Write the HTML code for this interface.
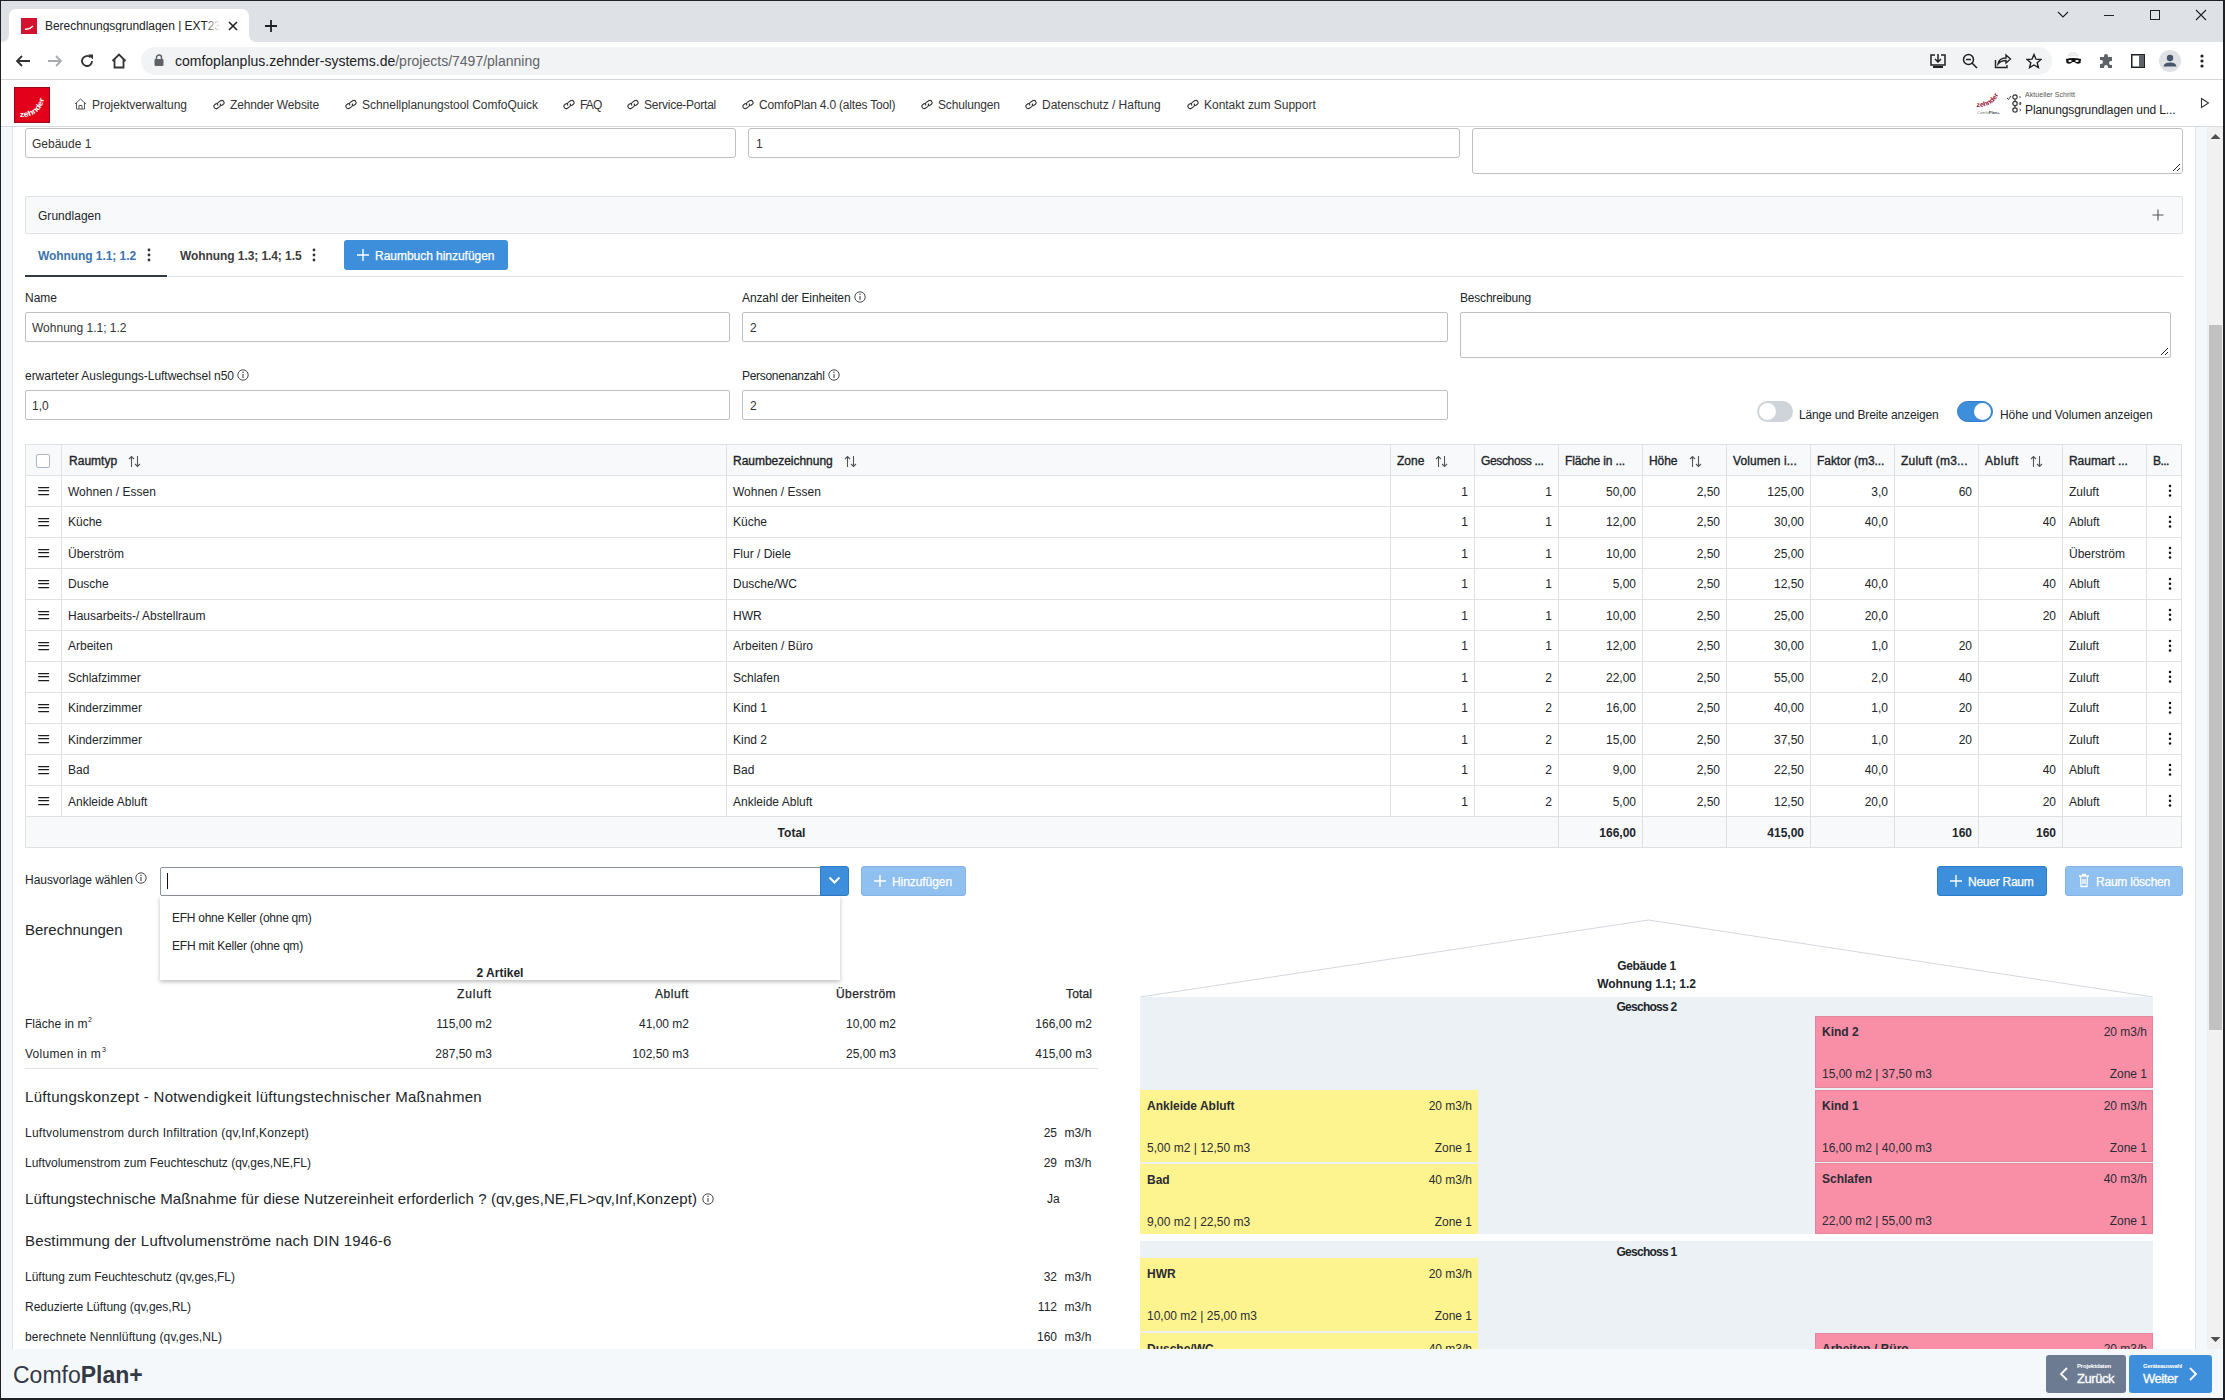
<!DOCTYPE html>
<html><head><meta charset="utf-8"><title>ComfoPlan+</title>
<style>
html,body{margin:0;padding:0;width:2225px;height:1400px;overflow:hidden;background:#fff;font-family:'Liberation Sans', sans-serif;}
.a{position:absolute;box-sizing:border-box;}
.t{white-space:nowrap;}
</style></head><body>
<div class="a" style="left:0px;top:0px;width:2225px;height:42px;background:#dee1e6;"></div>
<div class="a" style="left:0px;top:42px;width:2225px;height:38px;background:#ffffff;"></div>
<div class="a" style="left:0px;top:79px;width:2225px;height:1px;background:#d3d6da;"></div>
<svg class="a" style="left:0;top:0" width="300" height="43"><path d="M1 42 Q9 42 9 34 L9 17 Q9 9 17 9 L241 9 Q249 9 249 17 L249 34 Q249 42 257 42 Z" fill="#fff"/></svg>
<div class="a" style="left:21px;top:18px;width:16px;height:16px;background:#d2122e;"></div>
<svg class="a" style="left:21px;top:18px" width="16" height="16"><path d="M4 11 Q8 12 12 8" stroke="#fff" stroke-width="1.5" fill="none"/></svg>
<div class="a t" style="top:20px;font-size:12px;line-height:12px;color:#202124;left:45px;width:177px;overflow:hidden;letter-spacing:-0.042px;">Berechnungsgrundlagen | EXT23(</div>
<div class="a" style="left:204px;top:17px;width:19px;height:18px;background:linear-gradient(90deg,rgba(255,255,255,0),#fff 85%)"></div>
<svg class="a" style="left:227px;top:20px" width="12" height="12"><path d="M2 2L10 10M10 2L2 10" stroke="#202124" stroke-width="1.6"/></svg>
<svg class="a" style="left:264px;top:19px" width="14" height="14"><path d="M7 1V13M1 7H13" stroke="#202124" stroke-width="1.8"/></svg>
<svg class="a" style="left:2056px;top:10px" width="14" height="10"><path d="M2 2L7 7L12 2" stroke="#202124" stroke-width="1.2" fill="none"/></svg>
<div class="a" style="left:2104px;top:15px;width:10px;height:1px;background:#202124;"></div>
<div class="a" style="left:2150px;top:10px;width:10px;height:10px;border:1px solid #202124;box-sizing:border-box;"></div>
<svg class="a" style="left:2195px;top:9px" width="12" height="12"><path d="M1 1L11 11M11 1L1 11" stroke="#202124" stroke-width="1.1"/></svg>
<svg class="a" style="left:14px;top:53px" width="18" height="16"><path d="M16 8H3M8 3L3 8L8 13" stroke="#333" stroke-width="1.8" fill="none"/></svg>
<svg class="a" style="left:46px;top:53px" width="18" height="16"><path d="M2 8H15M10 3L15 8L10 13" stroke="#a8abaf" stroke-width="1.8" fill="none"/></svg>
<svg class="a" style="left:79px;top:53px" width="16" height="16"><path d="M13 8A5 5 0 1 1 11.5 4.4" stroke="#333" stroke-width="1.8" fill="none"/><path d="M9 1.5H14V6.5Z" fill="#333"/></svg>
<svg class="a" style="left:110px;top:52px" width="18" height="18"><path d="M2.5 9L9 2.5L15.5 9M4.5 7.5V15.5H13.5V7.5" stroke="#333" stroke-width="1.8" fill="none"/></svg>
<div class="a" style="left:141px;top:47px;width:1911px;height:28px;background:#f1f3f4;border-radius:14px;"></div>
<svg class="a" style="left:154px;top:54px" width="10" height="13"><rect x="0.5" y="5" width="9" height="7" rx="1" fill="#5f6368"/><path d="M2.5 5V3.5A2.5 2.5 0 0 1 7.5 3.5V5" stroke="#5f6368" stroke-width="1.5" fill="none"/></svg>
<div class="a" style="left:175px;top:54px;font-size:14px;line-height:14px;color:#202124">comfoplanplus.zehnder-systems.de<span style="color:#5f6368">/projects/7497/planning</span></div>
<svg class="a" style="left:1929px;top:53px" width="18" height="16"><path d="M6 2H2V12H16V2H12M9 1V9M6 6L9 9L12 6" stroke="#202124" stroke-width="1.5" fill="none"/><rect x="4" y="13" width="10" height="2" fill="#202124"/></svg>
<svg class="a" style="left:1962px;top:53px" width="16" height="16"><circle cx="6.5" cy="6.5" r="5" stroke="#202124" stroke-width="1.5" fill="none"/><path d="M4 6.5H9M10 10L15 15" stroke="#202124" stroke-width="1.5"/></svg>
<svg class="a" style="left:1994px;top:53px" width="18" height="16"><path d="M1.5 7V14.5H13V12M4 11Q5 5 12 5V2L16.5 6L12 10V7.5Q7 7.5 4 11Z" stroke="#202124" stroke-width="1.4" fill="none"/></svg>
<svg class="a" style="left:2026px;top:53px" width="16" height="16"><path d="M8 1.5L10 6.2L15 6.5L11.2 9.7L12.4 14.6L8 12L3.6 14.6L4.8 9.7L1 6.5L6 6.2Z" stroke="#202124" stroke-width="1.4" fill="none"/></svg>
<svg class="a" style="left:2065px;top:52px" width="17" height="16"><path d="M5 1H11L13 4H3Z" fill="#f4f4f4" stroke="#ccc" stroke-width="0.5"/><path d="M1 7Q8 5 16 7L15.5 11Q12 13 9.5 10H7.5Q5 13 1.5 11Z" fill="#111"/><ellipse cx="5" cy="9" rx="1.8" ry="1" fill="#fff"/><ellipse cx="12" cy="9" rx="1.8" ry="1" fill="#fff"/></svg>
<svg class="a" style="left:2099px;top:54px" width="15" height="15"><path d="M5 2A2 2 0 0 1 9 2V3H13V7H12A2 2 0 0 0 12 11H13V14H9V13A2 2 0 0 0 5 13V14H1V10H2A2 2 0 0 0 2 6H1V3H5Z" fill="#5f6368"/></svg>
<svg class="a" style="left:2131px;top:54px" width="14" height="14"><rect x="0.75" y="0.75" width="12.5" height="12.5" stroke="#202124" stroke-width="1.5" fill="none"/><rect x="8" y="1" width="5" height="12" fill="#5f6368"/></svg>
<svg class="a" style="left:2159px;top:50px" width="22" height="22"><circle cx="11" cy="11" r="11" fill="#dfe1e5"/><circle cx="11" cy="8" r="3.2" fill="#47546a"/><path d="M4.5 16.5Q5 12.5 11 12.5Q17 12.5 17.5 16.5Z" fill="#47546a"/></svg>
<svg class="a" style="left:2198px;top:53px" width="8" height="16"><circle cx="4" cy="3" r="1.6" fill="#202124"/><circle cx="4" cy="8" r="1.6" fill="#202124"/><circle cx="4" cy="13" r="1.6" fill="#202124"/></svg>
<div class="a" style="left:0px;top:80px;width:2225px;height:46px;background:#ffffff;"></div>
<div class="a" style="left:0px;top:126px;width:2225px;height:1px;background:#d8dde2;"></div>
<div class="a" style="left:14px;top:87px;width:36px;height:36px;background:#e2001a;"></div>
<div class="a" style="left:14px;top:87px;width:36px;height:36px;border:1px solid #9a0a17;box-sizing:border-box;"></div>
<svg class="a" style="left:14px;top:87px" width="36" height="36"><defs><path id="zp" d="M5.5 30 Q26 31 30.5 11"/></defs><text font-family="Liberation Sans" font-weight="bold" font-size="7.6" fill="#fff"><textPath href="#zp" textLength="34" lengthAdjust="spacingAndGlyphs">zehnder</textPath></text></svg>
<svg class="a" style="left:74px;top:98px" width="13" height="12"><path d="M1 6L6.5 1L12 6M2.5 5V11H10.5V5M5 11V7.5H8V11" stroke="#555" stroke-width="1" fill="none"/></svg>
<div class="a t" style="top:99px;font-size:12px;line-height:12px;color:#333;left:92px;letter-spacing:-0.023px;">Projektverwaltung</div>
<svg class="a" style="left:212px;top:99px" width="14" height="11"><g transform="rotate(-33 7 5.5)" stroke="#333" stroke-width="1.1" fill="none"><path d="M5.8 3.3H3.6A2.2 2.2 0 0 0 3.6 7.7H6.4A2.2 2.2 0 0 0 8.3 5.3"/><path d="M8.2 7.7H10.4A2.2 2.2 0 0 0 10.4 3.3H7.6A2.2 2.2 0 0 0 5.7 5.7"/></g></svg>
<div class="a t" style="top:99px;font-size:12px;line-height:12px;color:#333;left:230px;letter-spacing:-0.145px;">Zehnder Website</div>
<svg class="a" style="left:344px;top:99px" width="14" height="11"><g transform="rotate(-33 7 5.5)" stroke="#333" stroke-width="1.1" fill="none"><path d="M5.8 3.3H3.6A2.2 2.2 0 0 0 3.6 7.7H6.4A2.2 2.2 0 0 0 8.3 5.3"/><path d="M8.2 7.7H10.4A2.2 2.2 0 0 0 10.4 3.3H7.6A2.2 2.2 0 0 0 5.7 5.7"/></g></svg>
<div class="a t" style="top:99px;font-size:12px;line-height:12px;color:#333;left:362px;letter-spacing:-0.026px;">Schnellplanungstool ComfoQuick</div>
<svg class="a" style="left:562px;top:99px" width="14" height="11"><g transform="rotate(-33 7 5.5)" stroke="#333" stroke-width="1.1" fill="none"><path d="M5.8 3.3H3.6A2.2 2.2 0 0 0 3.6 7.7H6.4A2.2 2.2 0 0 0 8.3 5.3"/><path d="M8.2 7.7H10.4A2.2 2.2 0 0 0 10.4 3.3H7.6A2.2 2.2 0 0 0 5.7 5.7"/></g></svg>
<div class="a t" style="top:99px;font-size:12px;line-height:12px;color:#333;left:580px;letter-spacing:-0.872px;">FAQ</div>
<svg class="a" style="left:626px;top:99px" width="14" height="11"><g transform="rotate(-33 7 5.5)" stroke="#333" stroke-width="1.1" fill="none"><path d="M5.8 3.3H3.6A2.2 2.2 0 0 0 3.6 7.7H6.4A2.2 2.2 0 0 0 8.3 5.3"/><path d="M8.2 7.7H10.4A2.2 2.2 0 0 0 10.4 3.3H7.6A2.2 2.2 0 0 0 5.7 5.7"/></g></svg>
<div class="a t" style="top:99px;font-size:12px;line-height:12px;color:#333;left:644px;letter-spacing:-0.240px;">Service-Portal</div>
<svg class="a" style="left:741px;top:99px" width="14" height="11"><g transform="rotate(-33 7 5.5)" stroke="#333" stroke-width="1.1" fill="none"><path d="M5.8 3.3H3.6A2.2 2.2 0 0 0 3.6 7.7H6.4A2.2 2.2 0 0 0 8.3 5.3"/><path d="M8.2 7.7H10.4A2.2 2.2 0 0 0 10.4 3.3H7.6A2.2 2.2 0 0 0 5.7 5.7"/></g></svg>
<div class="a t" style="top:99px;font-size:12px;line-height:12px;color:#333;left:759px;letter-spacing:-0.192px;">ComfoPlan 4.0 (altes Tool)</div>
<svg class="a" style="left:920px;top:99px" width="14" height="11"><g transform="rotate(-33 7 5.5)" stroke="#333" stroke-width="1.1" fill="none"><path d="M5.8 3.3H3.6A2.2 2.2 0 0 0 3.6 7.7H6.4A2.2 2.2 0 0 0 8.3 5.3"/><path d="M8.2 7.7H10.4A2.2 2.2 0 0 0 10.4 3.3H7.6A2.2 2.2 0 0 0 5.7 5.7"/></g></svg>
<div class="a t" style="top:99px;font-size:12px;line-height:12px;color:#333;left:938px;letter-spacing:-0.169px;">Schulungen</div>
<svg class="a" style="left:1024px;top:99px" width="14" height="11"><g transform="rotate(-33 7 5.5)" stroke="#333" stroke-width="1.1" fill="none"><path d="M5.8 3.3H3.6A2.2 2.2 0 0 0 3.6 7.7H6.4A2.2 2.2 0 0 0 8.3 5.3"/><path d="M8.2 7.7H10.4A2.2 2.2 0 0 0 10.4 3.3H7.6A2.2 2.2 0 0 0 5.7 5.7"/></g></svg>
<div class="a t" style="top:99px;font-size:12px;line-height:12px;color:#333;left:1042px;letter-spacing:-0.006px;">Datenschutz / Haftung</div>
<svg class="a" style="left:1186px;top:99px" width="14" height="11"><g transform="rotate(-33 7 5.5)" stroke="#333" stroke-width="1.1" fill="none"><path d="M5.8 3.3H3.6A2.2 2.2 0 0 0 3.6 7.7H6.4A2.2 2.2 0 0 0 8.3 5.3"/><path d="M8.2 7.7H10.4A2.2 2.2 0 0 0 10.4 3.3H7.6A2.2 2.2 0 0 0 5.7 5.7"/></g></svg>
<div class="a t" style="top:99px;font-size:12px;line-height:12px;color:#333;left:1204px;letter-spacing:-0.019px;">Kontakt zum Support</div>
<svg class="a" style="left:1975px;top:90px" width="28" height="28"><defs><path id="zp2" d="M1.5 17 Q18 18 24.5 2.5"/></defs><text font-family="Liberation Sans" font-weight="bold" font-size="6.8" fill="#9a1532"><textPath href="#zp2" textLength="27" lengthAdjust="spacingAndGlyphs">zehnder</textPath></text><text x="2" y="24" font-family="Liberation Sans" font-size="4" fill="#888">Comfo<tspan font-weight="bold" fill="#444">Plan+</tspan></text></svg>
<svg class="a" style="left:2006px;top:93px" width="18" height="20"><path d="M1 5L2.5 6.5L5 3" stroke="#333" stroke-width="1" fill="none"/><circle cx="9" cy="4" r="2.2" stroke="#333" stroke-width="1.2" fill="none"/><circle cx="9" cy="10.5" r="2.2" stroke="#333" stroke-width="1.2" fill="none"/><circle cx="9" cy="17" r="2.2" stroke="#333" stroke-width="1.2" fill="none"/><path d="M9 6.2V8.3M9 12.7V14.8" stroke="#333" stroke-width="1.2"/><path d="M14 3V5M13.5 9.5H15V10.5H13.5V11.5H15M13.5 16L15 17L13.5 18" stroke="#333" stroke-width="0.8" fill="none"/></svg>
<div class="a t" style="top:91px;font-size:7px;line-height:7px;color:#555;left:2025px;letter-spacing:0.057px;">Aktueller Schritt</div>
<div class="a t" style="top:104px;font-size:12px;line-height:12px;color:#222;left:2025px;letter-spacing:-0.110px;">Planungsgrundlagen und L...</div>
<svg class="a" style="left:2200px;top:97px" width="10" height="12"><path d="M1.5 1.5L8.5 6L1.5 10.5Z" stroke="#333" stroke-width="1.1" fill="none"/></svg>
<div class="a" style="left:1px;top:127px;width:11px;height:1222px;background:#f4f8fa;"></div>
<div class="a" style="left:12px;top:127px;width:1px;height:1222px;background:#dfe3e8;"></div>
<div class="a" style="left:2195px;top:127px;width:1px;height:1222px;background:#dfe3e8;"></div>
<div class="a" style="left:2196px;top:127px;width:11px;height:1222px;background:#f4f8fa;"></div>
<div class="a" style="left:2207px;top:127px;width:16px;height:1222px;background:#f1f1f1;"></div>
<div class="a" style="left:2209px;top:325px;width:13px;height:705px;background:#c1c1c1;"></div>
<svg class="a" style="left:2210px;top:133px" width="11" height="7"><path d="M0.5 6L5.5 1L10.5 6Z" fill="#505050"/></svg>
<svg class="a" style="left:2210px;top:1336px" width="11" height="7"><path d="M0.5 1L5.5 6L10.5 1Z" fill="#505050"/></svg>
<div class="a" style="left:25px;top:128px;width:711px;height:30px;background:#fff;border:1px solid #bcc0c4;box-sizing:border-box;border-radius:3px;"></div>
<div class="a t" style="top:138px;font-size:12px;line-height:12px;color:#333;left:32px;">Gebäude 1</div>
<div class="a" style="left:748px;top:128px;width:712px;height:30px;background:#fff;border:1px solid #bcc0c4;box-sizing:border-box;border-radius:3px;"></div>
<div class="a t" style="top:138px;font-size:12px;line-height:12px;color:#333;left:756px;">1</div>
<div class="a" style="left:1472px;top:128px;width:711px;height:46px;background:#fff;border:1px solid #bcc0c4;box-sizing:border-box;border-radius:3px;"></div>
<svg class="a" style="left:2172px;top:163px" width="9" height="9"><path d="M8 1L1 8M8 5L5 8" stroke="#222" stroke-width="1"/></svg>
<div class="a" style="left:25px;top:196px;width:2158px;height:38px;background:#f8f9fa;border:1px solid #dee2e6;box-sizing:border-box;border-radius:2px;"></div>
<div class="a t" style="top:210px;font-size:12px;line-height:12px;color:#212529;left:38px;letter-spacing:0.028px;">Grundlagen</div>
<svg class="a" style="left:2152px;top:209px" width="12" height="12"><path d="M6 0.5V11.5M0.5 6H11.5" stroke="#555" stroke-width="1.1"/></svg>
<div class="a" style="left:25px;top:276px;width:2158px;height:1px;background:#dee2e6;"></div>
<div class="a" style="left:25px;top:275px;width:142px;height:2px;background:#333a40;"></div>
<div class="a t" style="top:250px;font-size:12px;line-height:12px;font-weight:700;color:#3b74ad;left:38px;letter-spacing:-0.070px;">Wohnung 1.1; 1.2</div>
<svg class="a" style="left:146px;top:247px" width="6" height="16"><circle cx="3" cy="3" r="1.4" fill="#333"/><circle cx="3" cy="8" r="1.4" fill="#333"/><circle cx="3" cy="13" r="1.4" fill="#333"/></svg>
<div class="a t" style="top:250px;font-size:12px;line-height:12px;font-weight:700;color:#3d3d3d;left:180px;letter-spacing:-0.078px;">Wohnung 1.3; 1.4; 1.5</div>
<svg class="a" style="left:311px;top:247px" width="6" height="16"><circle cx="3" cy="3" r="1.4" fill="#333"/><circle cx="3" cy="8" r="1.4" fill="#333"/><circle cx="3" cy="13" r="1.4" fill="#333"/></svg>
<div class="a" style="left:344px;top:240px;width:164px;height:30px;background:#3d8edb;border-radius:3px;"></div>
<svg class="a" style="left:357px;top:249px" width="12" height="12"><path d="M6 0V12M0 6H12" stroke="#fff" stroke-width="1.4"/></svg>
<div class="a t" style="top:250px;font-size:12px;line-height:12px;color:#fff;left:375px;-webkit-text-stroke:0.25px #fff;letter-spacing:-0.031px;">Raumbuch hinzufügen</div>
<div class="a t" style="top:292px;font-size:12px;line-height:12px;color:#212529;left:25px;">Name</div>
<div class="a t" style="top:292px;font-size:12px;line-height:12px;color:#212529;left:742px;letter-spacing:-0.113px;">Anzahl der Einheiten</div>
<svg class="a" style="left:854px;top:291px" width="12" height="12"><circle cx="6" cy="6" r="5.2" stroke="#333" stroke-width="0.9" fill="none"/><path d="M6 5V9" stroke="#333" stroke-width="1"/><circle cx="6" cy="3.3" r="0.7" fill="#333"/></svg>
<div class="a t" style="top:292px;font-size:12px;line-height:12px;color:#212529;left:1460px;letter-spacing:-0.199px;">Beschreibung</div>
<div class="a" style="left:25px;top:312px;width:705px;height:30px;background:#fff;border:1px solid #bcc0c4;box-sizing:border-box;border-radius:2px;"></div>
<div class="a t" style="top:322px;font-size:12px;line-height:12px;color:#333;left:32px;">Wohnung 1.1; 1.2</div>
<div class="a" style="left:742px;top:312px;width:706px;height:30px;background:#fff;border:1px solid #bcc0c4;box-sizing:border-box;border-radius:2px;"></div>
<div class="a t" style="top:322px;font-size:12px;line-height:12px;color:#333;left:750px;">2</div>
<div class="a" style="left:1460px;top:312px;width:711px;height:46px;background:#fff;border:1px solid #bcc0c4;box-sizing:border-box;border-radius:2px;"></div>
<svg class="a" style="left:2160px;top:347px" width="9" height="9"><path d="M8 1L1 8M8 5L5 8" stroke="#222" stroke-width="1"/></svg>
<div class="a t" style="top:370px;font-size:12px;line-height:12px;color:#212529;left:25px;letter-spacing:-0.030px;">erwarteter Auslegungs-Luftwechsel n50</div>
<svg class="a" style="left:237px;top:369px" width="12" height="12"><circle cx="6" cy="6" r="5.2" stroke="#333" stroke-width="0.9" fill="none"/><path d="M6 5V9" stroke="#333" stroke-width="1"/><circle cx="6" cy="3.3" r="0.7" fill="#333"/></svg>
<div class="a t" style="top:370px;font-size:12px;line-height:12px;color:#212529;left:742px;letter-spacing:-0.302px;">Personenanzahl</div>
<svg class="a" style="left:828px;top:369px" width="12" height="12"><circle cx="6" cy="6" r="5.2" stroke="#333" stroke-width="0.9" fill="none"/><path d="M6 5V9" stroke="#333" stroke-width="1"/><circle cx="6" cy="3.3" r="0.7" fill="#333"/></svg>
<div class="a" style="left:25px;top:390px;width:705px;height:30px;background:#fff;border:1px solid #bcc0c4;box-sizing:border-box;border-radius:2px;"></div>
<div class="a t" style="top:400px;font-size:12px;line-height:12px;color:#333;left:32px;">1,0</div>
<div class="a" style="left:742px;top:390px;width:706px;height:30px;background:#fff;border:1px solid #bcc0c4;box-sizing:border-box;border-radius:2px;"></div>
<div class="a t" style="top:400px;font-size:12px;line-height:12px;color:#333;left:750px;">2</div>
<div class="a" style="left:1757px;top:401px;width:36px;height:21px;background:#ced4da;border-radius:11px;"></div>
<div class="a" style="left:1759px;top:403px;width:17px;height:17px;border-radius:50%;background:#fff"></div>
<div class="a t" style="top:409px;font-size:12px;line-height:12px;color:#212529;left:1799px;letter-spacing:-0.158px;">Länge und Breite anzeigen</div>
<div class="a" style="left:1957px;top:401px;width:36px;height:21px;background:#3d8edb;border:1px solid #2f7bc8;box-sizing:border-box;border-radius:11px;"></div>
<div class="a" style="left:1974px;top:403px;width:17px;height:17px;border-radius:50%;background:#fff"></div>
<div class="a t" style="top:409px;font-size:12px;line-height:12px;color:#212529;left:2000px;letter-spacing:-0.065px;">Höhe und Volumen anzeigen</div>
<div class="a" style="left:25px;top:444px;width:2157px;height:404px;background:#fff;border:1px solid #dee2e6;box-sizing:border-box;"></div>
<div class="a" style="left:26px;top:445px;width:2155px;height:30px;background:#f8f9fa;"></div>
<div class="a" style="left:26px;top:817px;width:2155px;height:30px;background:#f8f9fa;"></div>
<div class="a" style="left:25px;top:475px;width:2157px;height:1px;background:#dee2e6;"></div>
<div class="a" style="left:25px;top:506px;width:2157px;height:1px;background:#dee2e6;"></div>
<div class="a" style="left:25px;top:537px;width:2157px;height:1px;background:#dee2e6;"></div>
<div class="a" style="left:25px;top:568px;width:2157px;height:1px;background:#dee2e6;"></div>
<div class="a" style="left:25px;top:599px;width:2157px;height:1px;background:#dee2e6;"></div>
<div class="a" style="left:25px;top:630px;width:2157px;height:1px;background:#dee2e6;"></div>
<div class="a" style="left:25px;top:661px;width:2157px;height:1px;background:#dee2e6;"></div>
<div class="a" style="left:25px;top:692px;width:2157px;height:1px;background:#dee2e6;"></div>
<div class="a" style="left:25px;top:723px;width:2157px;height:1px;background:#dee2e6;"></div>
<div class="a" style="left:25px;top:754px;width:2157px;height:1px;background:#dee2e6;"></div>
<div class="a" style="left:25px;top:785px;width:2157px;height:1px;background:#dee2e6;"></div>
<div class="a" style="left:25px;top:816px;width:2157px;height:1px;background:#dee2e6;"></div>
<div class="a" style="left:61px;top:444px;width:1px;height:372px;background:#dee2e6;"></div>
<div class="a" style="left:726px;top:444px;width:1px;height:372px;background:#dee2e6;"></div>
<div class="a" style="left:1390px;top:444px;width:1px;height:372px;background:#dee2e6;"></div>
<div class="a" style="left:1474px;top:444px;width:1px;height:372px;background:#dee2e6;"></div>
<div class="a" style="left:1558px;top:444px;width:1px;height:372px;background:#dee2e6;"></div>
<div class="a" style="left:1642px;top:444px;width:1px;height:372px;background:#dee2e6;"></div>
<div class="a" style="left:1726px;top:444px;width:1px;height:372px;background:#dee2e6;"></div>
<div class="a" style="left:1810px;top:444px;width:1px;height:372px;background:#dee2e6;"></div>
<div class="a" style="left:1894px;top:444px;width:1px;height:372px;background:#dee2e6;"></div>
<div class="a" style="left:1978px;top:444px;width:1px;height:372px;background:#dee2e6;"></div>
<div class="a" style="left:2062px;top:444px;width:1px;height:372px;background:#dee2e6;"></div>
<div class="a" style="left:2146px;top:444px;width:1px;height:372px;background:#dee2e6;"></div>
<div class="a" style="left:1558px;top:816px;width:1px;height:31px;background:#dee2e6;"></div>
<div class="a" style="left:1642px;top:816px;width:1px;height:31px;background:#dee2e6;"></div>
<div class="a" style="left:1726px;top:816px;width:1px;height:31px;background:#dee2e6;"></div>
<div class="a" style="left:1810px;top:816px;width:1px;height:31px;background:#dee2e6;"></div>
<div class="a" style="left:1894px;top:816px;width:1px;height:31px;background:#dee2e6;"></div>
<div class="a" style="left:1978px;top:816px;width:1px;height:31px;background:#dee2e6;"></div>
<div class="a" style="left:2062px;top:816px;width:1px;height:31px;background:#dee2e6;"></div>
<div class="a" style="left:36px;top:454px;width:14px;height:14px;background:#fff;border:1px solid #adb5bd;box-sizing:border-box;border-radius:2px;"></div>
<div class="a t" style="top:455px;font-size:12px;line-height:12px;color:#212529;left:69px;-webkit-text-stroke:0.35px #212529;letter-spacing:0.024px;">Raumtyp</div>
<div class="a t" style="top:455px;font-size:12px;line-height:12px;color:#212529;left:733px;-webkit-text-stroke:0.35px #212529;letter-spacing:-0.025px;">Raumbezeichnung</div>
<div class="a t" style="top:455px;font-size:12px;line-height:12px;color:#212529;left:1397px;-webkit-text-stroke:0.35px #212529;letter-spacing:0.010px;">Zone</div>
<div class="a t" style="top:455px;font-size:12px;line-height:12px;color:#212529;left:1481px;-webkit-text-stroke:0.35px #212529;letter-spacing:-0.359px;">Geschoss ...</div>
<div class="a t" style="top:455px;font-size:12px;line-height:12px;color:#212529;left:1565px;-webkit-text-stroke:0.35px #212529;letter-spacing:-0.156px;">Fläche in ...</div>
<div class="a t" style="top:455px;font-size:12px;line-height:12px;color:#212529;left:1649px;-webkit-text-stroke:0.35px #212529;letter-spacing:-0.047px;">Höhe</div>
<div class="a t" style="top:455px;font-size:12px;line-height:12px;color:#212529;left:1733px;-webkit-text-stroke:0.35px #212529;letter-spacing:0.108px;">Volumen i...</div>
<div class="a t" style="top:455px;font-size:12px;line-height:12px;color:#212529;left:1817px;-webkit-text-stroke:0.35px #212529;letter-spacing:-0.047px;">Faktor (m3...</div>
<div class="a t" style="top:455px;font-size:12px;line-height:12px;color:#212529;left:1901px;-webkit-text-stroke:0.35px #212529;letter-spacing:0.206px;">Zuluft (m3...</div>
<div class="a t" style="top:455px;font-size:12px;line-height:12px;color:#212529;left:1985px;-webkit-text-stroke:0.35px #212529;letter-spacing:0.519px;">Abluft</div>
<div class="a t" style="top:455px;font-size:12px;line-height:12px;color:#212529;left:2069px;-webkit-text-stroke:0.35px #212529;letter-spacing:-0.042px;">Raumart ...</div>
<div class="a t" style="top:455px;font-size:12px;line-height:12px;color:#212529;left:2153px;-webkit-text-stroke:0.35px #212529;letter-spacing:-0.529px;">B...</div>
<svg class="a" style="left:128px;top:455px" width="13" height="13"><path d="M3.5 12V1.5M1 4L3.5 1.5L6 4M9.5 1V11.5M7 9L9.5 11.5L12 9" stroke="#555" stroke-width="1.1" fill="none"/></svg>
<svg class="a" style="left:844px;top:455px" width="13" height="13"><path d="M3.5 12V1.5M1 4L3.5 1.5L6 4M9.5 1V11.5M7 9L9.5 11.5L12 9" stroke="#555" stroke-width="1.1" fill="none"/></svg>
<svg class="a" style="left:1435px;top:455px" width="13" height="13"><path d="M3.5 12V1.5M1 4L3.5 1.5L6 4M9.5 1V11.5M7 9L9.5 11.5L12 9" stroke="#555" stroke-width="1.1" fill="none"/></svg>
<svg class="a" style="left:1689px;top:455px" width="13" height="13"><path d="M3.5 12V1.5M1 4L3.5 1.5L6 4M9.5 1V11.5M7 9L9.5 11.5L12 9" stroke="#555" stroke-width="1.1" fill="none"/></svg>
<svg class="a" style="left:2030px;top:455px" width="13" height="13"><path d="M3.5 12V1.5M1 4L3.5 1.5L6 4M9.5 1V11.5M7 9L9.5 11.5L12 9" stroke="#555" stroke-width="1.1" fill="none"/></svg>
<svg class="a" style="left:38px;top:487px" width="12" height="9"><path d="M0.7 0.5H10.6M0.7 3.5H10.6M0.7 7.5H10.6" stroke="#1c1c1c" stroke-width="1.25" stroke-linecap="round"/></svg>
<div class="a t" style="top:486px;font-size:12px;line-height:12px;color:#212529;left:68px;">Wohnen / Essen</div>
<div class="a t" style="top:486px;font-size:12px;line-height:12px;color:#212529;left:733px;">Wohnen / Essen</div>
<div class="a t" style="top:486px;font-size:12px;line-height:12px;color:#212529;right:757px;">1</div>
<div class="a t" style="top:486px;font-size:12px;line-height:12px;color:#212529;right:673px;">1</div>
<div class="a t" style="top:486px;font-size:12px;line-height:12px;color:#212529;right:589px;">50,00</div>
<div class="a t" style="top:486px;font-size:12px;line-height:12px;color:#212529;right:505px;">2,50</div>
<div class="a t" style="top:486px;font-size:12px;line-height:12px;color:#212529;right:421px;">125,00</div>
<div class="a t" style="top:486px;font-size:12px;line-height:12px;color:#212529;right:337px;">3,0</div>
<div class="a t" style="top:486px;font-size:12px;line-height:12px;color:#212529;right:253px;">60</div>
<div class="a t" style="top:486px;font-size:12px;line-height:12px;color:#212529;left:2069px;">Zuluft</div>
<svg class="a" style="left:2167px;top:483px" width="6" height="15.6"><circle cx="3" cy="3" r="1.25" fill="#111"/><circle cx="3" cy="7.8" r="1.25" fill="#111"/><circle cx="3" cy="12.6" r="1.25" fill="#111"/></svg>
<svg class="a" style="left:38px;top:518px" width="12" height="9"><path d="M0.7 0.5H10.6M0.7 3.5H10.6M0.7 7.5H10.6" stroke="#1c1c1c" stroke-width="1.25" stroke-linecap="round"/></svg>
<div class="a t" style="top:516px;font-size:12px;line-height:12px;color:#212529;left:68px;">Küche</div>
<div class="a t" style="top:516px;font-size:12px;line-height:12px;color:#212529;left:733px;">Küche</div>
<div class="a t" style="top:516px;font-size:12px;line-height:12px;color:#212529;right:757px;">1</div>
<div class="a t" style="top:516px;font-size:12px;line-height:12px;color:#212529;right:673px;">1</div>
<div class="a t" style="top:516px;font-size:12px;line-height:12px;color:#212529;right:589px;">12,00</div>
<div class="a t" style="top:516px;font-size:12px;line-height:12px;color:#212529;right:505px;">2,50</div>
<div class="a t" style="top:516px;font-size:12px;line-height:12px;color:#212529;right:421px;">30,00</div>
<div class="a t" style="top:516px;font-size:12px;line-height:12px;color:#212529;right:337px;">40,0</div>
<div class="a t" style="top:516px;font-size:12px;line-height:12px;color:#212529;right:169px;">40</div>
<div class="a t" style="top:516px;font-size:12px;line-height:12px;color:#212529;left:2069px;">Abluft</div>
<svg class="a" style="left:2167px;top:514px" width="6" height="15.6"><circle cx="3" cy="3" r="1.25" fill="#111"/><circle cx="3" cy="7.8" r="1.25" fill="#111"/><circle cx="3" cy="12.6" r="1.25" fill="#111"/></svg>
<svg class="a" style="left:38px;top:549px" width="12" height="9"><path d="M0.7 0.5H10.6M0.7 3.5H10.6M0.7 7.5H10.6" stroke="#1c1c1c" stroke-width="1.25" stroke-linecap="round"/></svg>
<div class="a t" style="top:548px;font-size:12px;line-height:12px;color:#212529;left:68px;">Überström</div>
<div class="a t" style="top:548px;font-size:12px;line-height:12px;color:#212529;left:733px;">Flur / Diele</div>
<div class="a t" style="top:548px;font-size:12px;line-height:12px;color:#212529;right:757px;">1</div>
<div class="a t" style="top:548px;font-size:12px;line-height:12px;color:#212529;right:673px;">1</div>
<div class="a t" style="top:548px;font-size:12px;line-height:12px;color:#212529;right:589px;">10,00</div>
<div class="a t" style="top:548px;font-size:12px;line-height:12px;color:#212529;right:505px;">2,50</div>
<div class="a t" style="top:548px;font-size:12px;line-height:12px;color:#212529;right:421px;">25,00</div>
<div class="a t" style="top:548px;font-size:12px;line-height:12px;color:#212529;left:2069px;">Überström</div>
<svg class="a" style="left:2167px;top:545px" width="6" height="15.6"><circle cx="3" cy="3" r="1.25" fill="#111"/><circle cx="3" cy="7.8" r="1.25" fill="#111"/><circle cx="3" cy="12.6" r="1.25" fill="#111"/></svg>
<svg class="a" style="left:38px;top:580px" width="12" height="9"><path d="M0.7 0.5H10.6M0.7 3.5H10.6M0.7 7.5H10.6" stroke="#1c1c1c" stroke-width="1.25" stroke-linecap="round"/></svg>
<div class="a t" style="top:578px;font-size:12px;line-height:12px;color:#212529;left:68px;">Dusche</div>
<div class="a t" style="top:578px;font-size:12px;line-height:12px;color:#212529;left:733px;">Dusche/WC</div>
<div class="a t" style="top:578px;font-size:12px;line-height:12px;color:#212529;right:757px;">1</div>
<div class="a t" style="top:578px;font-size:12px;line-height:12px;color:#212529;right:673px;">1</div>
<div class="a t" style="top:578px;font-size:12px;line-height:12px;color:#212529;right:589px;">5,00</div>
<div class="a t" style="top:578px;font-size:12px;line-height:12px;color:#212529;right:505px;">2,50</div>
<div class="a t" style="top:578px;font-size:12px;line-height:12px;color:#212529;right:421px;">12,50</div>
<div class="a t" style="top:578px;font-size:12px;line-height:12px;color:#212529;right:337px;">40,0</div>
<div class="a t" style="top:578px;font-size:12px;line-height:12px;color:#212529;right:169px;">40</div>
<div class="a t" style="top:578px;font-size:12px;line-height:12px;color:#212529;left:2069px;">Abluft</div>
<svg class="a" style="left:2167px;top:576px" width="6" height="15.6"><circle cx="3" cy="3" r="1.25" fill="#111"/><circle cx="3" cy="7.8" r="1.25" fill="#111"/><circle cx="3" cy="12.6" r="1.25" fill="#111"/></svg>
<svg class="a" style="left:38px;top:611px" width="12" height="9"><path d="M0.7 0.5H10.6M0.7 3.5H10.6M0.7 7.5H10.6" stroke="#1c1c1c" stroke-width="1.25" stroke-linecap="round"/></svg>
<div class="a t" style="top:610px;font-size:12px;line-height:12px;color:#212529;left:68px;">Hausarbeits-/ Abstellraum</div>
<div class="a t" style="top:610px;font-size:12px;line-height:12px;color:#212529;left:733px;">HWR</div>
<div class="a t" style="top:610px;font-size:12px;line-height:12px;color:#212529;right:757px;">1</div>
<div class="a t" style="top:610px;font-size:12px;line-height:12px;color:#212529;right:673px;">1</div>
<div class="a t" style="top:610px;font-size:12px;line-height:12px;color:#212529;right:589px;">10,00</div>
<div class="a t" style="top:610px;font-size:12px;line-height:12px;color:#212529;right:505px;">2,50</div>
<div class="a t" style="top:610px;font-size:12px;line-height:12px;color:#212529;right:421px;">25,00</div>
<div class="a t" style="top:610px;font-size:12px;line-height:12px;color:#212529;right:337px;">20,0</div>
<div class="a t" style="top:610px;font-size:12px;line-height:12px;color:#212529;right:169px;">20</div>
<div class="a t" style="top:610px;font-size:12px;line-height:12px;color:#212529;left:2069px;">Abluft</div>
<svg class="a" style="left:2167px;top:607px" width="6" height="15.6"><circle cx="3" cy="3" r="1.25" fill="#111"/><circle cx="3" cy="7.8" r="1.25" fill="#111"/><circle cx="3" cy="12.6" r="1.25" fill="#111"/></svg>
<svg class="a" style="left:38px;top:642px" width="12" height="9"><path d="M0.7 0.5H10.6M0.7 3.5H10.6M0.7 7.5H10.6" stroke="#1c1c1c" stroke-width="1.25" stroke-linecap="round"/></svg>
<div class="a t" style="top:640px;font-size:12px;line-height:12px;color:#212529;left:68px;">Arbeiten</div>
<div class="a t" style="top:640px;font-size:12px;line-height:12px;color:#212529;left:733px;">Arbeiten / Büro</div>
<div class="a t" style="top:640px;font-size:12px;line-height:12px;color:#212529;right:757px;">1</div>
<div class="a t" style="top:640px;font-size:12px;line-height:12px;color:#212529;right:673px;">1</div>
<div class="a t" style="top:640px;font-size:12px;line-height:12px;color:#212529;right:589px;">12,00</div>
<div class="a t" style="top:640px;font-size:12px;line-height:12px;color:#212529;right:505px;">2,50</div>
<div class="a t" style="top:640px;font-size:12px;line-height:12px;color:#212529;right:421px;">30,00</div>
<div class="a t" style="top:640px;font-size:12px;line-height:12px;color:#212529;right:337px;">1,0</div>
<div class="a t" style="top:640px;font-size:12px;line-height:12px;color:#212529;right:253px;">20</div>
<div class="a t" style="top:640px;font-size:12px;line-height:12px;color:#212529;left:2069px;">Zuluft</div>
<svg class="a" style="left:2167px;top:638px" width="6" height="15.6"><circle cx="3" cy="3" r="1.25" fill="#111"/><circle cx="3" cy="7.8" r="1.25" fill="#111"/><circle cx="3" cy="12.6" r="1.25" fill="#111"/></svg>
<svg class="a" style="left:38px;top:673px" width="12" height="9"><path d="M0.7 0.5H10.6M0.7 3.5H10.6M0.7 7.5H10.6" stroke="#1c1c1c" stroke-width="1.25" stroke-linecap="round"/></svg>
<div class="a t" style="top:672px;font-size:12px;line-height:12px;color:#212529;left:68px;">Schlafzimmer</div>
<div class="a t" style="top:672px;font-size:12px;line-height:12px;color:#212529;left:733px;">Schlafen</div>
<div class="a t" style="top:672px;font-size:12px;line-height:12px;color:#212529;right:757px;">1</div>
<div class="a t" style="top:672px;font-size:12px;line-height:12px;color:#212529;right:673px;">2</div>
<div class="a t" style="top:672px;font-size:12px;line-height:12px;color:#212529;right:589px;">22,00</div>
<div class="a t" style="top:672px;font-size:12px;line-height:12px;color:#212529;right:505px;">2,50</div>
<div class="a t" style="top:672px;font-size:12px;line-height:12px;color:#212529;right:421px;">55,00</div>
<div class="a t" style="top:672px;font-size:12px;line-height:12px;color:#212529;right:337px;">2,0</div>
<div class="a t" style="top:672px;font-size:12px;line-height:12px;color:#212529;right:253px;">40</div>
<div class="a t" style="top:672px;font-size:12px;line-height:12px;color:#212529;left:2069px;">Zuluft</div>
<svg class="a" style="left:2167px;top:669px" width="6" height="15.6"><circle cx="3" cy="3" r="1.25" fill="#111"/><circle cx="3" cy="7.8" r="1.25" fill="#111"/><circle cx="3" cy="12.6" r="1.25" fill="#111"/></svg>
<svg class="a" style="left:38px;top:704px" width="12" height="9"><path d="M0.7 0.5H10.6M0.7 3.5H10.6M0.7 7.5H10.6" stroke="#1c1c1c" stroke-width="1.25" stroke-linecap="round"/></svg>
<div class="a t" style="top:702px;font-size:12px;line-height:12px;color:#212529;left:68px;">Kinderzimmer</div>
<div class="a t" style="top:702px;font-size:12px;line-height:12px;color:#212529;left:733px;">Kind 1</div>
<div class="a t" style="top:702px;font-size:12px;line-height:12px;color:#212529;right:757px;">1</div>
<div class="a t" style="top:702px;font-size:12px;line-height:12px;color:#212529;right:673px;">2</div>
<div class="a t" style="top:702px;font-size:12px;line-height:12px;color:#212529;right:589px;">16,00</div>
<div class="a t" style="top:702px;font-size:12px;line-height:12px;color:#212529;right:505px;">2,50</div>
<div class="a t" style="top:702px;font-size:12px;line-height:12px;color:#212529;right:421px;">40,00</div>
<div class="a t" style="top:702px;font-size:12px;line-height:12px;color:#212529;right:337px;">1,0</div>
<div class="a t" style="top:702px;font-size:12px;line-height:12px;color:#212529;right:253px;">20</div>
<div class="a t" style="top:702px;font-size:12px;line-height:12px;color:#212529;left:2069px;">Zuluft</div>
<svg class="a" style="left:2167px;top:700px" width="6" height="15.6"><circle cx="3" cy="3" r="1.25" fill="#111"/><circle cx="3" cy="7.8" r="1.25" fill="#111"/><circle cx="3" cy="12.6" r="1.25" fill="#111"/></svg>
<svg class="a" style="left:38px;top:735px" width="12" height="9"><path d="M0.7 0.5H10.6M0.7 3.5H10.6M0.7 7.5H10.6" stroke="#1c1c1c" stroke-width="1.25" stroke-linecap="round"/></svg>
<div class="a t" style="top:734px;font-size:12px;line-height:12px;color:#212529;left:68px;">Kinderzimmer</div>
<div class="a t" style="top:734px;font-size:12px;line-height:12px;color:#212529;left:733px;">Kind 2</div>
<div class="a t" style="top:734px;font-size:12px;line-height:12px;color:#212529;right:757px;">1</div>
<div class="a t" style="top:734px;font-size:12px;line-height:12px;color:#212529;right:673px;">2</div>
<div class="a t" style="top:734px;font-size:12px;line-height:12px;color:#212529;right:589px;">15,00</div>
<div class="a t" style="top:734px;font-size:12px;line-height:12px;color:#212529;right:505px;">2,50</div>
<div class="a t" style="top:734px;font-size:12px;line-height:12px;color:#212529;right:421px;">37,50</div>
<div class="a t" style="top:734px;font-size:12px;line-height:12px;color:#212529;right:337px;">1,0</div>
<div class="a t" style="top:734px;font-size:12px;line-height:12px;color:#212529;right:253px;">20</div>
<div class="a t" style="top:734px;font-size:12px;line-height:12px;color:#212529;left:2069px;">Zuluft</div>
<svg class="a" style="left:2167px;top:731px" width="6" height="15.6"><circle cx="3" cy="3" r="1.25" fill="#111"/><circle cx="3" cy="7.8" r="1.25" fill="#111"/><circle cx="3" cy="12.6" r="1.25" fill="#111"/></svg>
<svg class="a" style="left:38px;top:766px" width="12" height="9"><path d="M0.7 0.5H10.6M0.7 3.5H10.6M0.7 7.5H10.6" stroke="#1c1c1c" stroke-width="1.25" stroke-linecap="round"/></svg>
<div class="a t" style="top:764px;font-size:12px;line-height:12px;color:#212529;left:68px;">Bad</div>
<div class="a t" style="top:764px;font-size:12px;line-height:12px;color:#212529;left:733px;">Bad</div>
<div class="a t" style="top:764px;font-size:12px;line-height:12px;color:#212529;right:757px;">1</div>
<div class="a t" style="top:764px;font-size:12px;line-height:12px;color:#212529;right:673px;">2</div>
<div class="a t" style="top:764px;font-size:12px;line-height:12px;color:#212529;right:589px;">9,00</div>
<div class="a t" style="top:764px;font-size:12px;line-height:12px;color:#212529;right:505px;">2,50</div>
<div class="a t" style="top:764px;font-size:12px;line-height:12px;color:#212529;right:421px;">22,50</div>
<div class="a t" style="top:764px;font-size:12px;line-height:12px;color:#212529;right:337px;">40,0</div>
<div class="a t" style="top:764px;font-size:12px;line-height:12px;color:#212529;right:169px;">40</div>
<div class="a t" style="top:764px;font-size:12px;line-height:12px;color:#212529;left:2069px;">Abluft</div>
<svg class="a" style="left:2167px;top:762px" width="6" height="15.6"><circle cx="3" cy="3" r="1.25" fill="#111"/><circle cx="3" cy="7.8" r="1.25" fill="#111"/><circle cx="3" cy="12.6" r="1.25" fill="#111"/></svg>
<svg class="a" style="left:38px;top:797px" width="12" height="9"><path d="M0.7 0.5H10.6M0.7 3.5H10.6M0.7 7.5H10.6" stroke="#1c1c1c" stroke-width="1.25" stroke-linecap="round"/></svg>
<div class="a t" style="top:796px;font-size:12px;line-height:12px;color:#212529;left:68px;">Ankleide Abluft</div>
<div class="a t" style="top:796px;font-size:12px;line-height:12px;color:#212529;left:733px;">Ankleide Abluft</div>
<div class="a t" style="top:796px;font-size:12px;line-height:12px;color:#212529;right:757px;">1</div>
<div class="a t" style="top:796px;font-size:12px;line-height:12px;color:#212529;right:673px;">2</div>
<div class="a t" style="top:796px;font-size:12px;line-height:12px;color:#212529;right:589px;">5,00</div>
<div class="a t" style="top:796px;font-size:12px;line-height:12px;color:#212529;right:505px;">2,50</div>
<div class="a t" style="top:796px;font-size:12px;line-height:12px;color:#212529;right:421px;">12,50</div>
<div class="a t" style="top:796px;font-size:12px;line-height:12px;color:#212529;right:337px;">20,0</div>
<div class="a t" style="top:796px;font-size:12px;line-height:12px;color:#212529;right:169px;">20</div>
<div class="a t" style="top:796px;font-size:12px;line-height:12px;color:#212529;left:2069px;">Abluft</div>
<svg class="a" style="left:2167px;top:793px" width="6" height="15.6"><circle cx="3" cy="3" r="1.25" fill="#111"/><circle cx="3" cy="7.8" r="1.25" fill="#111"/><circle cx="3" cy="12.6" r="1.25" fill="#111"/></svg>
<div class="a t" style="top:827px;font-size:12px;line-height:12px;font-weight:700;color:#212529;left:291.5px;width:1000px;text-align:center;">Total</div>
<div class="a t" style="top:827px;font-size:12px;line-height:12px;font-weight:700;color:#212529;right:589px;">166,00</div>
<div class="a t" style="top:827px;font-size:12px;line-height:12px;font-weight:700;color:#212529;right:421px;">415,00</div>
<div class="a t" style="top:827px;font-size:12px;line-height:12px;font-weight:700;color:#212529;right:253px;">160</div>
<div class="a t" style="top:827px;font-size:12px;line-height:12px;font-weight:700;color:#212529;right:169px;">160</div>
<div class="a t" style="top:874px;font-size:12px;line-height:12px;color:#212529;left:25px;letter-spacing:-0.041px;">Hausvorlage wählen</div>
<svg class="a" style="left:135px;top:872px" width="12" height="12"><circle cx="6" cy="6" r="5.2" stroke="#333" stroke-width="0.9" fill="none"/><path d="M6 5V9" stroke="#333" stroke-width="1"/><circle cx="6" cy="3.3" r="0.7" fill="#333"/></svg>
<div class="a" style="left:160px;top:867px;width:661px;height:29px;background:#fff;border:1px solid #8a9097;box-sizing:border-box;border-radius:2px 0 0 2px;"></div>
<div class="a" style="left:167px;top:873px;width:1px;height:16px;background:#111;"></div>
<div class="a" style="left:820px;top:866px;width:29px;height:30px;background:#3d8edb;border:1px solid #2e7ac6;box-sizing:border-box;border-radius:0 3px 3px 0;"></div>
<svg class="a" style="left:828px;top:876px" width="13" height="9"><path d="M1.5 1.5L6.5 6.5L11.5 1.5" stroke="#fff" stroke-width="2" fill="none"/></svg>
<div class="a" style="left:861px;top:866px;width:105px;height:30px;background:#8fc0ef;border:1px solid #82b4e6;box-sizing:border-box;border-radius:3px;"></div>
<svg class="a" style="left:874px;top:875px" width="12" height="12"><path d="M6 0V12M0 6H12" stroke="#fff" stroke-width="1.4"/></svg>
<div class="a t" style="top:876px;font-size:12px;line-height:12px;color:#fff;left:892px;-webkit-text-stroke:0.25px #fff;letter-spacing:-0.072px;">Hinzufügen</div>
<div class="a" style="left:1937px;top:866px;width:110px;height:30px;background:#3d8edb;border:1px solid #2e7ac6;box-sizing:border-box;border-radius:3px;"></div>
<svg class="a" style="left:1950px;top:875px" width="12" height="12"><path d="M6 0V12M0 6H12" stroke="#fff" stroke-width="1.4"/></svg>
<div class="a t" style="top:876px;font-size:12px;line-height:12px;color:#fff;left:1968px;-webkit-text-stroke:0.25px #fff;letter-spacing:-0.253px;">Neuer Raum</div>
<div class="a" style="left:2065px;top:866px;width:118px;height:30px;background:#8fc0ef;border:1px solid #82b4e6;box-sizing:border-box;border-radius:3px;"></div>
<svg class="a" style="left:2078px;top:873px" width="12" height="15"><path d="M1 3H11M4.5 3V1.5H7.5V3M2.5 3.5L3 13.5H9L9.5 3.5M5 6V11M7 6V11" stroke="#fff" stroke-width="1.3" fill="none"/></svg>
<div class="a t" style="top:876px;font-size:12px;line-height:12px;color:#fff;left:2096px;-webkit-text-stroke:0.25px #fff;letter-spacing:-0.227px;">Raum löschen</div>
<div class="a t" style="top:922px;font-size:15px;line-height:15px;color:#212529;left:25px;letter-spacing:-0.008px;">Berechnungen</div>
<div class="a t" style="top:988px;font-size:12px;line-height:12px;color:#212529;right:1733px;-webkit-text-stroke:0.25px #212529;letter-spacing:0.831px;">Zuluft</div>
<div class="a t" style="top:988px;font-size:12px;line-height:12px;color:#212529;right:1536px;-webkit-text-stroke:0.25px #212529;letter-spacing:0.552px;">Abluft</div>
<div class="a t" style="top:988px;font-size:12px;line-height:12px;color:#212529;right:1329px;-webkit-text-stroke:0.25px #212529;letter-spacing:0.443px;">Überström</div>
<div class="a t" style="top:988px;font-size:12px;line-height:12px;color:#212529;right:1133px;-webkit-text-stroke:0.25px #212529;letter-spacing:0.128px;">Total</div>
<div class="a t" style="top:1018px;font-size:12px;line-height:12px;color:#212529;left:25px;letter-spacing:0.043px;">Fläche in m</div>
<div class="a t" style="top:1016px;font-size:7px;line-height:7px;color:#212529;left:88px;">2</div>
<div class="a t" style="top:1048px;font-size:12px;line-height:12px;color:#212529;left:25px;letter-spacing:0.275px;">Volumen in m</div>
<div class="a t" style="top:1046px;font-size:7px;line-height:7px;color:#212529;left:102px;">3</div>
<div class="a t" style="top:1018px;font-size:12px;line-height:12px;color:#212529;right:1733px;">115,00 m2</div>
<div class="a t" style="top:1018px;font-size:12px;line-height:12px;color:#212529;right:1536px;">41,00 m2</div>
<div class="a t" style="top:1018px;font-size:12px;line-height:12px;color:#212529;right:1329px;">10,00 m2</div>
<div class="a t" style="top:1018px;font-size:12px;line-height:12px;color:#212529;right:1133px;">166,00 m2</div>
<div class="a t" style="top:1048px;font-size:12px;line-height:12px;color:#212529;right:1733px;">287,50 m3</div>
<div class="a t" style="top:1048px;font-size:12px;line-height:12px;color:#212529;right:1536px;">102,50 m3</div>
<div class="a t" style="top:1048px;font-size:12px;line-height:12px;color:#212529;right:1329px;">25,00 m3</div>
<div class="a t" style="top:1048px;font-size:12px;line-height:12px;color:#212529;right:1133px;">415,00 m3</div>
<div class="a" style="left:25px;top:1068px;width:1073px;height:1px;background:#dee2e6;"></div>
<div class="a t" style="top:1089px;font-size:15px;line-height:15px;color:#212529;left:25px;letter-spacing:0.288px;">Lüftungskonzept - Notwendigkeit lüftungstechnischer Maßnahmen</div>
<div class="a t" style="top:1127px;font-size:12px;line-height:12px;color:#212529;left:25px;letter-spacing:0.245px;">Luftvolumenstrom durch Infiltration (qv,Inf,Konzept)</div>
<div class="a t" style="top:1127px;font-size:12px;line-height:12px;color:#212529;right:1168px;">25</div>
<div class="a t" style="top:1127px;font-size:12px;line-height:12px;color:#212529;left:1064.5px;letter-spacing:0.078px;">m3/h</div>
<div class="a t" style="top:1157px;font-size:12px;line-height:12px;color:#212529;left:25px;letter-spacing:0.002px;">Luftvolumenstrom zum Feuchteschutz (qv,ges,NE,FL)</div>
<div class="a t" style="top:1157px;font-size:12px;line-height:12px;color:#212529;right:1168px;">29</div>
<div class="a t" style="top:1157px;font-size:12px;line-height:12px;color:#212529;left:1064.5px;letter-spacing:0.078px;">m3/h</div>
<div class="a t" style="top:1191px;font-size:15px;line-height:15px;color:#212529;left:25px;letter-spacing:0.097px;">Lüftungstechnische Maßnahme für diese Nutzereinheit erforderlich ? (qv,ges,NE,FL&gt;qv,Inf,Konzept)</div>
<svg class="a" style="left:702px;top:1193px" width="12" height="12"><circle cx="6" cy="6" r="5.2" stroke="#333" stroke-width="0.9" fill="none"/><path d="M6 5V9" stroke="#333" stroke-width="1"/><circle cx="6" cy="3.3" r="0.7" fill="#333"/></svg>
<div class="a t" style="top:1193px;font-size:12px;line-height:12px;color:#212529;left:1047px;">Ja</div>
<div class="a t" style="top:1233px;font-size:15px;line-height:15px;color:#212529;left:25px;letter-spacing:0.166px;">Bestimmung der Luftvolumenströme nach DIN 1946-6</div>
<div class="a t" style="top:1271px;font-size:12px;line-height:12px;color:#212529;left:25px;letter-spacing:-0.015px;">Lüftung zum Feuchteschutz (qv,ges,FL)</div>
<div class="a t" style="top:1271px;font-size:12px;line-height:12px;color:#212529;right:1168px;">32</div>
<div class="a t" style="top:1271px;font-size:12px;line-height:12px;color:#212529;left:1064.5px;letter-spacing:0.078px;">m3/h</div>
<div class="a t" style="top:1301px;font-size:12px;line-height:12px;color:#212529;left:25px;letter-spacing:0.004px;">Reduzierte Lüftung (qv,ges,RL)</div>
<div class="a t" style="top:1301px;font-size:12px;line-height:12px;color:#212529;right:1168px;">112</div>
<div class="a t" style="top:1301px;font-size:12px;line-height:12px;color:#212529;left:1064.5px;letter-spacing:0.078px;">m3/h</div>
<div class="a t" style="top:1331px;font-size:12px;line-height:12px;color:#212529;left:25px;letter-spacing:0.131px;">berechnete Nennlüftung (qv,ges,NL)</div>
<div class="a t" style="top:1331px;font-size:12px;line-height:12px;color:#212529;right:1168px;">160</div>
<div class="a t" style="top:1331px;font-size:12px;line-height:12px;color:#212529;left:1064.5px;letter-spacing:0.078px;">m3/h</div>
<svg class="a" style="left:1130px;top:910px" width="1040" height="100"><path d="M10 87L518.5 10L1023 87" stroke="#d3d8de" stroke-width="1" fill="none"/></svg>
<div class="a t" style="top:960px;font-size:12px;line-height:12px;font-weight:700;color:#212529;left:1146.5px;width:1000px;text-align:center;letter-spacing:-0.307px;">Gebäude 1</div>
<div class="a t" style="top:978px;font-size:12px;line-height:12px;font-weight:700;color:#212529;left:1146.5px;width:1000px;text-align:center;letter-spacing:-0.027px;">Wohnung 1.1; 1.2</div>
<div class="a" style="left:1140px;top:997px;width:1013px;height:237px;background:#ecf1f5;"></div>
<div class="a t" style="top:1001px;font-size:12px;line-height:12px;font-weight:700;color:#212529;left:1146.5px;width:1000px;text-align:center;letter-spacing:-0.738px;">Geschoss 2</div>
<div class="a" style="left:1140px;top:1241px;width:1013px;height:108px;background:#ecf1f5;"></div>
<div class="a t" style="top:1246px;font-size:12px;line-height:12px;font-weight:700;color:#212529;left:1146.5px;width:1000px;text-align:center;letter-spacing:-0.738px;">Geschoss 1</div>
<div class="a" style="left:1815px;top:1016px;width:338px;height:72px;background:#f98fa7;border:1px solid #e2869b;box-sizing:border-box;"></div>
<div class="a t" style="top:1026px;font-size:12px;line-height:12px;font-weight:700;color:#2b2b33;left:1822px;">Kind 2</div>
<div class="a t" style="top:1026px;font-size:12px;line-height:12px;color:#2b2b33;right:78px;">20 m3/h</div>
<div class="a t" style="top:1068px;font-size:12px;line-height:12px;color:#2b2b33;left:1822px;">15,00 m2 | 37,50 m3</div>
<div class="a t" style="top:1068px;font-size:12px;line-height:12px;color:#2b2b33;right:78px;">Zone 1</div>
<div class="a" style="left:1815px;top:1090px;width:338px;height:72px;background:#f98fa7;border:1px solid #e2869b;box-sizing:border-box;"></div>
<div class="a t" style="top:1100px;font-size:12px;line-height:12px;font-weight:700;color:#2b2b33;left:1822px;">Kind 1</div>
<div class="a t" style="top:1100px;font-size:12px;line-height:12px;color:#2b2b33;right:78px;">20 m3/h</div>
<div class="a t" style="top:1142px;font-size:12px;line-height:12px;color:#2b2b33;left:1822px;">16,00 m2 | 40,00 m3</div>
<div class="a t" style="top:1142px;font-size:12px;line-height:12px;color:#2b2b33;right:78px;">Zone 1</div>
<div class="a" style="left:1815px;top:1163px;width:338px;height:71px;background:#f98fa7;border:1px solid #e2869b;box-sizing:border-box;"></div>
<div class="a t" style="top:1173px;font-size:12px;line-height:12px;font-weight:700;color:#2b2b33;left:1822px;">Schlafen</div>
<div class="a t" style="top:1173px;font-size:12px;line-height:12px;color:#2b2b33;right:78px;">40 m3/h</div>
<div class="a t" style="top:1215px;font-size:12px;line-height:12px;color:#2b2b33;left:1822px;">22,00 m2 | 55,00 m3</div>
<div class="a t" style="top:1215px;font-size:12px;line-height:12px;color:#2b2b33;right:78px;">Zone 1</div>
<div class="a" style="left:1140px;top:1090px;width:338px;height:72px;background:#fdf48f;"></div>
<div class="a t" style="top:1100px;font-size:12px;line-height:12px;font-weight:700;color:#2b2b33;left:1147px;">Ankleide Abluft</div>
<div class="a t" style="top:1100px;font-size:12px;line-height:12px;color:#2b2b33;right:753px;">20 m3/h</div>
<div class="a t" style="top:1142px;font-size:12px;line-height:12px;color:#2b2b33;left:1147px;">5,00 m2 | 12,50 m3</div>
<div class="a t" style="top:1142px;font-size:12px;line-height:12px;color:#2b2b33;right:753px;">Zone 1</div>
<div class="a" style="left:1140px;top:1164px;width:338px;height:70px;background:#fdf48f;"></div>
<div class="a t" style="top:1174px;font-size:12px;line-height:12px;font-weight:700;color:#2b2b33;left:1147px;">Bad</div>
<div class="a t" style="top:1174px;font-size:12px;line-height:12px;color:#2b2b33;right:753px;">40 m3/h</div>
<div class="a t" style="top:1216px;font-size:12px;line-height:12px;color:#2b2b33;left:1147px;">9,00 m2 | 22,50 m3</div>
<div class="a t" style="top:1216px;font-size:12px;line-height:12px;color:#2b2b33;right:753px;">Zone 1</div>
<div class="a" style="left:1140px;top:1258px;width:338px;height:73px;background:#fdf48f;"></div>
<div class="a t" style="top:1268px;font-size:12px;line-height:12px;font-weight:700;color:#2b2b33;left:1147px;">HWR</div>
<div class="a t" style="top:1268px;font-size:12px;line-height:12px;color:#2b2b33;right:753px;">20 m3/h</div>
<div class="a t" style="top:1310px;font-size:12px;line-height:12px;color:#2b2b33;left:1147px;">10,00 m2 | 25,00 m3</div>
<div class="a t" style="top:1310px;font-size:12px;line-height:12px;color:#2b2b33;right:753px;">Zone 1</div>
<div class="a" style="left:1140px;top:1333px;width:338px;height:72px;background:#fdf48f;"></div>
<div class="a t" style="top:1343px;font-size:12px;line-height:12px;font-weight:700;color:#2b2b33;left:1147px;">Dusche/WC</div>
<div class="a t" style="top:1343px;font-size:12px;line-height:12px;color:#2b2b33;right:753px;">40 m3/h</div>
<div class="a t" style="top:1385px;font-size:12px;line-height:12px;color:#2b2b33;left:1147px;">5,00 m2 | 12,50 m3</div>
<div class="a t" style="top:1385px;font-size:12px;line-height:12px;color:#2b2b33;right:753px;">Zone 1</div>
<div class="a" style="left:1815px;top:1333px;width:338px;height:72px;background:#f98fa7;border:1px solid #e2869b;box-sizing:border-box;"></div>
<div class="a t" style="top:1343px;font-size:12px;line-height:12px;font-weight:700;color:#2b2b33;left:1822px;">Arbeiten / Büro</div>
<div class="a t" style="top:1343px;font-size:12px;line-height:12px;color:#2b2b33;right:78px;">20 m3/h</div>
<div class="a t" style="top:1385px;font-size:12px;line-height:12px;color:#2b2b33;left:1822px;">12,00 m2 | 30,00 m3</div>
<div class="a t" style="top:1385px;font-size:12px;line-height:12px;color:#2b2b33;right:78px;">Zone 1</div>
<div class="a" style="left:160px;top:896px;width:680px;height:84px;background:#fff;box-shadow:0 2px 4px rgba(0,0,0,0.25);"></div>
<div class="a t" style="top:912px;font-size:12px;line-height:12px;color:#212529;left:172px;letter-spacing:-0.263px;">EFH ohne Keller (ohne qm)</div>
<div class="a t" style="top:940px;font-size:12px;line-height:12px;color:#212529;left:172px;letter-spacing:-0.182px;">EFH mit Keller (ohne qm)</div>
<div class="a" style="left:160px;top:960px;width:680px;height:20px;overflow:hidden"><div style="position:absolute;left:0;top:7px;width:680px;text-align:center;font-size:12px;line-height:12px;font-weight:700;color:#212529">2 Artikel</div></div>
<div class="a" style="left:1px;top:1349px;width:2222px;height:49px;background:#f5f8fa;"></div>
<div class="a" style="left:13px;top:1364px;font-size:23px;line-height:23px;color:#333a45">Comfo<b>Plan+</b></div>
<div class="a" style="left:2046px;top:1355px;width:80px;height:38px;background:#6d7b92;border-radius:3px;"></div>
<div class="a" style="left:2129px;top:1355px;width:83px;height:38px;background:#3d8edb;border-radius:3px;"></div>
<svg class="a" style="left:2059px;top:1367px" width="10" height="14"><path d="M8 1L2 7L8 13" stroke="#fff" stroke-width="1.8" fill="none"/></svg>
<svg class="a" style="left:2188px;top:1367px" width="10" height="14"><path d="M2 1L8 7L2 13" stroke="#fff" stroke-width="1.8" fill="none"/></svg>
<div class="a t" style="top:1363px;font-size:6px;line-height:6px;font-weight:700;color:#fff;left:2077px;letter-spacing:-0.195px;">Projektdaten</div>
<div class="a t" style="top:1372px;font-size:13px;line-height:13px;color:#fff;left:2077px;-webkit-text-stroke:0.3px #fff;letter-spacing:-0.456px;">Zurück</div>
<div class="a t" style="top:1363px;font-size:6px;line-height:6px;font-weight:700;color:#fff;left:2143px;letter-spacing:-0.284px;">Geräteauswahl</div>
<div class="a t" style="top:1372px;font-size:13px;line-height:13px;color:#fff;left:2143px;-webkit-text-stroke:0.3px #fff;letter-spacing:-0.471px;">Weiter</div>
<div class="a" style="left:0px;top:0px;width:2225px;height:1px;background:#202124;"></div>
<div class="a" style="left:0px;top:0px;width:1px;height:1400px;background:#202124;"></div>
<div class="a" style="left:2223px;top:0px;width:2px;height:1400px;background:#202124;"></div>
<div class="a" style="left:0px;top:1398px;width:2225px;height:2px;background:#202124;"></div>
</body></html>
